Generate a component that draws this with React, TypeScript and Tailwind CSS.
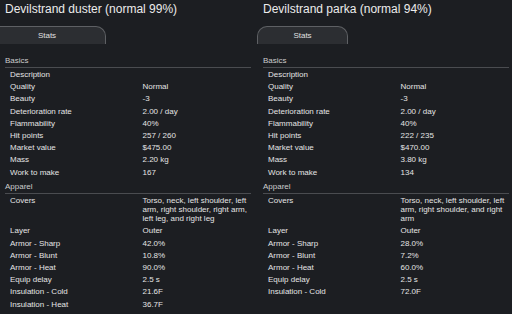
import React from "react";

type Row = [string, string];

const Section = ({ title, rows, first }: { title: string; rows: Row[]; first?: boolean }) => (
  <div className={first ? "" : "mt-[4px]"}>
    <div className="leading-[9px] pb-[2px] border-b border-[#4a4c50] text-[#cdcdcd]">{title}</div>
    <div className="mt-[0.5px]">
      {rows.map(([k, v], i) => (
        <div key={i} className="flex pl-[5px] py-[1.6px] leading-[9px]">
          <div className="w-[132.5px] shrink-0">{k}</div>
          <div className="flex-1">{v}</div>
        </div>
      ))}
    </div>
  </div>
);

const Panel = ({
  title,
  basics,
  apparel,
  tabClass,
  colClass,
}: {
  title: string;
  basics: Row[];
  apparel: Row[];
  tabClass: string;
  colClass: string;
}) => (
  <div className={colClass}>
    <div className="mt-[2px] text-[12px] leading-[14px] text-[#ececec] whitespace-nowrap">{title}</div>
    <div
      className={
        "mt-[10px] h-[18px] rounded-t-[10px] border border-b-0 border-[#5e6064] bg-[#2c2e32] flex items-center justify-center text-[8px] text-[#e0e0e0] " +
        tabClass
      }
    >
      Stats
    </div>
    <div className="mt-[12px] text-[8px] text-[#e4e4e4]">
      <Section title="Basics" rows={basics} first />
      <Section title="Apparel" rows={apparel} />
    </div>
  </div>
);

export default function App() {
  return (
    <div
      className="w-[512px] h-[314px] overflow-hidden bg-[#1c1e22] flex"
      style={{ fontFamily: '"Liberation Sans", Arial, sans-serif' }}
    >
      <Panel
        colClass="w-[258px] shrink-0 pl-[5px] pr-[7px]"
        tabClass="-ml-[17px] w-[118px]"
        title="Devilstrand duster (normal 99%)"
        basics={[
          ["Description", ""],
          ["Quality", "Normal"],
          ["Beauty", "-3"],
          ["Deterioration rate", "2.00 / day"],
          ["Flammability", "40%"],
          ["Hit points", "257 / 260"],
          ["Market value", "$475.00"],
          ["Mass", "2.20 kg"],
          ["Work to make", "167"],
        ]}
        apparel={[
          ["Covers", "Torso, neck, left shoulder, left arm, right shoulder, right arm, left leg, and right leg"],
          ["Layer", "Outer"],
          ["Armor - Sharp", "42.0%"],
          ["Armor - Blunt", "10.8%"],
          ["Armor - Heat", "90.0%"],
          ["Equip delay", "2.5 s"],
          ["Insulation - Cold", "21.6F"],
          ["Insulation - Heat", "36.7F"],
        ]}
      />
      <Panel
        colClass="w-[254px] shrink-0 pl-[5px] pr-[3px]"
        tabClass="-ml-[6px] w-[91px]"
        title="Devilstrand parka (normal 94%)"
        basics={[
          ["Description", ""],
          ["Quality", "Normal"],
          ["Beauty", "-3"],
          ["Deterioration rate", "2.00 / day"],
          ["Flammability", "40%"],
          ["Hit points", "222 / 235"],
          ["Market value", "$470.00"],
          ["Mass", "3.80 kg"],
          ["Work to make", "134"],
        ]}
        apparel={[
          ["Covers", "Torso, neck, left shoulder, left arm, right shoulder, and right arm"],
          ["Layer", "Outer"],
          ["Armor - Sharp", "28.0%"],
          ["Armor - Blunt", "7.2%"],
          ["Armor - Heat", "60.0%"],
          ["Equip delay", "2.5 s"],
          ["Insulation - Cold", "72.0F"],
        ]}
      />
    </div>
  );
}
